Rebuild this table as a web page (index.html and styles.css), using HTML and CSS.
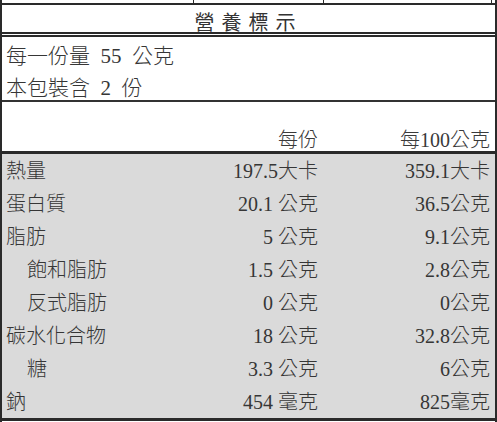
FILE: index.html
```html
<!DOCTYPE html>
<html lang="zh-Hant">
<head>
<meta charset="utf-8">
<title>營養標示</title>
<link rel="stylesheet" href="styles.css">
</head>
<body>
<div class="label">
  <div class="strip"><span class="s1"></span><span class="s2"></span><span class="s3"></span><span class="s4"></span></div>
  <div class="title">營養標示</div>
  <div class="serving">
    <div class="line">每一份量&nbsp;&nbsp;55&nbsp;&nbsp;公克</div>
    <div class="line">本包裝含&nbsp;&nbsp;2&nbsp;&nbsp;份</div>
  </div>
  <div class="colhead">
    <span></span><span class="c2">每份</span><span class="c3">每100公克</span>
  </div>
  <div class="rows">
    <div class="row"><span class="name">熱量</span><span class="c2">197.5大卡</span><span class="c3">359.1大卡</span></div>
    <div class="row"><span class="name">蛋白質</span><span class="c2">20.1 公克</span><span class="c3">36.5公克</span></div>
    <div class="row"><span class="name">脂肪</span><span class="c2">5 公克</span><span class="c3">9.1公克</span></div>
    <div class="row"><span class="name sub">飽和脂肪</span><span class="c2">1.5 公克</span><span class="c3">2.8公克</span></div>
    <div class="row"><span class="name sub">反式脂肪</span><span class="c2">0 公克</span><span class="c3">0公克</span></div>
    <div class="row"><span class="name">碳水化合物</span><span class="c2">18 公克</span><span class="c3">32.8公克</span></div>
    <div class="row"><span class="name sub">糖</span><span class="c2">3.3 公克</span><span class="c3">6公克</span></div>
    <div class="row"><span class="name">鈉</span><span class="c2">454 毫克</span><span class="c3">825毫克</span></div>
  </div>
</div>
</body>
</html>
```

FILE: styles.css
```css
html, body {
  margin: 0;
  padding: 0;
  background: #ffffff;
}

.label {
  width: 497px;
  height: 422px;
  box-sizing: border-box;
  border-left: 2px solid #2a2a2a;
  border-right: 2px solid #2a2a2a;
  font-family: "Liberation Serif", "Noto Sans CJK TC", serif;
  font-weight: 300;
  color: #363636;
  overflow: hidden;
}

.strip {
  height: 3px;
  border-bottom: 2px solid #2a2a2a;
  display: grid;
  grid-template-columns: 192px 130px 168px 1fr;
}

.strip span {
  border-right: 1px solid #2a2a2a;
}

.strip .s4 {
  border-right: none;
}

.title {
  height: 32px;
  box-sizing: border-box;
  padding-top: 6px;
  border-bottom: 5px double #2a2a2a;
  text-align: center;
  font-family: "Noto Sans CJK TC", sans-serif;
  font-weight: 400;
  font-size: 20px;
  line-height: 22px;
  letter-spacing: 7px;
  color: #333333;
}

.serving {
  height: 65px;
  box-sizing: border-box;
  padding: 3px 0 0 4px;
  border-bottom: 2px solid #333333;
  font-size: 21px;
}

.line {
  height: 32px;
  line-height: 32px;
}

.colhead,
.row {
  display: grid;
  grid-template-columns: 1fr 120px 172px;
  padding: 0 5px 0 4px;
  font-size: 20px;
}

.colhead {
  height: 52px;
  box-sizing: border-box;
  align-items: end;
  line-height: 22px;
  border-bottom: 3px solid #2a2a2a;
  color: #3a3a3a;
}

.c2,
.c3 {
  text-align: right;
  white-space: nowrap;
}

.rows {
  background: #dadada;
  border-bottom: 3px solid #2a2a2a;
}

.row {
  height: 33px;
  line-height: 35px;
}

.name.sub {
  padding-left: 21px;
}
```
